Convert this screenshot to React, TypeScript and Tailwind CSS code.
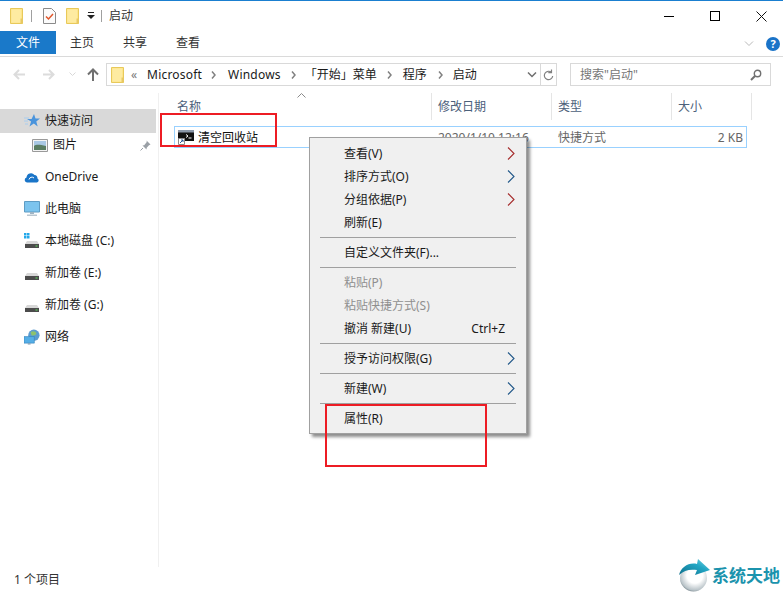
import React from 'react';

const FolderIcon = ({ className = '' }: { className?: string }) => (
  <svg width="13" height="16" viewBox="0 0 13 16" className={className}>
    <path d="M.5.5h12v15H.5z" fill="#fde58a" stroke="#e8c95a" />
    <path d="M1.500 1.500h9.500v13h-9.500z" fill="#fdeeab" opacity=".7" />
    <path d="M10.500 10.500h2v5h-2z" fill="#e8c864" />
  </svg>
);

const CheckDocIcon = () => (
  <svg width="13" height="16" viewBox="0 0 13 16">
    <path d="M.5.5h8l4 4v11H.5z" fill="#fbfbfb" stroke="#8a8a8a" />
    <path d="M3 8.500l2.500 2.500L10 6" fill="none" stroke="#e0562a" strokeWidth="1.500" />
  </svg>
);

const Arrow = ({ color, flip = false }: { color: string; flip?: boolean }) => (
  <svg width="12" height="11" viewBox="0 0 12 11" className={flip ? 'rotate-180' : ''}>
    <path d="M1.500 5.500H12M6 1L1.500 5.500 6 10" fill="none" stroke={color} strokeWidth="2" />
  </svg>
);

const Crumb = () => (
  <svg width="5" height="8" viewBox="0 0 5 8" className="shrink-0">
    <path d="M1 .5L4 4 1 7.500" fill="none" stroke="#808080" strokeWidth="1.500" />
  </svg>
);

const MenuChevron = ({ red = false }: { red?: boolean }) => (
  <svg width="8" height="13" viewBox="0 0 8 13">
    <path d="M1 .5L7 6.500 1 12.500" fill="none" stroke={red ? '#a52a2a' : '#1f5688'} strokeWidth="1.100" />
  </svg>
);

const StarIcon = () => (
  <svg width="16" height="16" viewBox="0 0 16 16">
    <path d="M10 1l1.500 4.600H16l-3.700 2.900 1.400 5-3.900-3-4.300 3 1.600-5L3 6h4.600z" fill="#4a94dc" />
    <path d="M0 5h5M0 8h4M1 11h3" stroke="#a8cdef" strokeWidth="1" />
  </svg>
);

const PictureIcon = () => (
  <svg width="16" height="13" viewBox="0 0 16 13">
    <path d="M.5.500h15v12H.5z" fill="#f4f4f4" stroke="#9a9a9a" />
    <path d="M2 2h12v5H2z" fill="#a9c8e4" />
    <path d="M2 7c3-2 6-1 12 0v4H2z" fill="#5a7d62" />
  </svg>
);

const PinIcon = () => (
  <svg width="11" height="11" viewBox="0 0 11 11">
    <path d="M6.500.5l4 4-1.500.7-2.300 2.600-.2 1.700-4-4 1.700-.2L6.800 2z" fill="#9aa0a6" />
    <path d="M3 8L.5 10.500" stroke="#9aa0a6" />
  </svg>
);

const CloudIcon = () => (
  <svg width="16" height="11" viewBox="0 0 16 11">
    <path d="M3 10.500A2.500 2.500 0 0 1 2.500 5.600 4.500 4.500 0 0 1 10.500 3a3.500 3.500 0 0 1 3 3.400 2.200 2.200 0 0 1-.5 4.100z" fill="#1a75c8" />
    <path d="M5 7.500a3 3 0 0 1 5-1.500" fill="none" stroke="#fff" strokeWidth="1" />
  </svg>
);

const MonitorIcon = () => (
  <svg width="16" height="16" viewBox="0 0 16 16">
    <path d="M.5.500h15v10.500H.5z" fill="#7cc4ee" stroke="#5e9cc4" />
    <path d="M6 11h4v2H6z" fill="#9fb4c4" />
    <path d="M3 13.500h10V15H3z" fill="#b9c6d0" />
  </svg>
);

const DriveIcon = ({ windows = false }: { windows?: boolean }) => (
  <svg width="16" height="16" viewBox="0 0 16 16">
    {windows && <path d="M0 0h2.500v2.500H0zM3 0h2.500v2.500H3zM0 3h2.500v2.500H0zM3 3h2.500v2.500H3z" fill="#23a8ea" />}
    <path d="M3 8h10l2 3H1z" fill="#d8d8d8" />
    <path d="M1 11h14v4H1z" fill="#4c4c4c" />
    <path d="M11.500 12.500h2v1h-2z" fill="#5ee05e" />
  </svg>
);

const NetworkIcon = () => (
  <svg width="17" height="17" viewBox="0 0 17 17">
    <circle cx="10.500" cy="6" r="6" fill="#5b9bd0" />
    <path d="M7 3c2-2 6-1 6 1s-3 3-5 2z" fill="#8cc26e" />
    <path d="M0 7.500h11v7H0z" fill="#55aee6" stroke="#2f7fb8" strokeWidth=".6" />
    <path d="M4 14.500h3V16H4z" fill="#8aa4b8" />
  </svg>
);

const ConsoleIcon = () => (
  <svg width="16" height="15" viewBox="0 0 16 15">
    <path d="M0 0h16v11H0z" fill="#111" />
    <path d="M0 0h16v2.500H0z" fill="#8a97a8" />
    <path d="M8 4.500l2 1.500-2 1.500M10.500 8h3" fill="none" stroke="#fff" strokeWidth="1" />
    <path d="M.5 8.500h6v6h-6z" fill="#fff" stroke="#8a8a8a" />
    <path d="M2 13l3-3M3 10h2v2" fill="none" stroke="#2a5d9c" strokeWidth="1" />
  </svg>
);

const LogoIcon = () => (
  <svg width="33" height="34" viewBox="0 0 33 34">
    <defs>
      <radialGradient id="ball" cx="0.55" cy="0.4" r="0.65">
        <stop offset="0.45" stopColor="#ffffff" />
        <stop offset="0.85" stopColor="#b9c3c8" />
        <stop offset="1" stopColor="#5f7078" />
      </radialGradient>
      <linearGradient id="swoosh" x1="0" y1="1" x2="1" y2="0">
        <stop offset="0" stopColor="#0f6f8c" />
        <stop offset="0.6" stopColor="#22a6c4" />
        <stop offset="1" stopColor="#7fd6e6" />
      </linearGradient>
    </defs>
    <circle cx="15.500" cy="20" r="13.500" fill="url(#ball)" />
    <path d="M1 17C3 9 11 4 19 6l1-5 12 11-15 5 2-5C12 11 6 12 1 17z" fill="url(#swoosh)" />
  </svg>
);

type NavItem = { label: string; icon: React.ReactNode; indent?: boolean; active?: boolean; pin?: boolean; gap: string };

const navItems: NavItem[] = [
  { label: '快速访问', icon: <StarIcon />, active: true, gap: 'mt-0' },
  { label: '图片', icon: <PictureIcon />, indent: true, pin: true, gap: 'mt-0' },
  { label: 'OneDrive', icon: <CloudIcon />, gap: 'mt-2' },
  { label: '此电脑', icon: <MonitorIcon />, gap: 'mt-2' },
  { label: '本地磁盘 (C:)', icon: <DriveIcon windows />, gap: 'mt-2' },
  { label: '新加卷 (E:)', icon: <DriveIcon />, gap: 'mt-2' },
  { label: '新加卷 (G:)', icon: <DriveIcon />, gap: 'mt-2' },
  { label: '网络', icon: <NetworkIcon />, gap: 'mt-2' },
];

type MenuEntry = { label?: string; arrow?: 'red' | 'blue'; disabled?: boolean; hint?: string; sep?: boolean };

const menu: MenuEntry[] = [
  { label: '查看(V)', arrow: 'red' },
  { label: '排序方式(O)', arrow: 'blue' },
  { label: '分组依据(P)', arrow: 'red' },
  { label: '刷新(E)' },
  { sep: true },
  { label: '自定义文件夹(F)...' },
  { sep: true },
  { label: '粘贴(P)', disabled: true },
  { label: '粘贴快捷方式(S)', disabled: true },
  { label: '撤消 新建(U)', hint: 'Ctrl+Z' },
  { sep: true },
  { label: '授予访问权限(G)', arrow: 'blue' },
  { sep: true },
  { label: '新建(W)', arrow: 'blue' },
  { sep: true },
  { label: '属性(R)' },
];

const columns = [
  { label: '修改日期', w: 'w-[120px]' },
  { label: '类型', w: 'w-[120px]' },
  { label: '大小', w: 'w-[80px]' },
];

export default function App() {
  return (
    <div className="relative w-[783px] h-[592px] overflow-hidden bg-white text-[12px] leading-none text-[#1a1a1a] font-['Noto_Sans','Noto_Sans_CJK_SC',sans-serif] border-t border-[#1a7fd0] flex flex-col">
      {/* title bar */}
      <div className="h-[30px] shrink-0 flex items-center pl-[10px]">
        <FolderIcon />
        <div className="w-px h-[12px] bg-[#a0a0a0] ml-[8px]" />
        <div className="ml-[11px]"><CheckDocIcon /></div>
        <div className="ml-[10px]"><FolderIcon /></div>
        <svg width="8" height="8" viewBox="0 0 8 8" className="ml-[8px]">
          <path d="M1 0h6v1H1zM0 3h8L4 7z" fill="#222" />
        </svg>
        <div className="w-px h-[12px] bg-[#a0a0a0] ml-[6px]" />
        <span className="ml-[7px] text-[#333]">启动</span>
        <div className="ml-auto flex items-center">
          <div className="w-[10px] h-px bg-black mr-[36px]" />
          <div className="w-[10px] h-[10px] border border-black mr-[36px]" />
          <svg width="11" height="11" viewBox="0 0 11 11" className="mr-[16px]">
            <path d="M.5.500l10 10M10.500.500l-10 10" stroke="#111" strokeWidth="1" />
          </svg>
        </div>
      </div>

      {/* ribbon tabs */}
      <div className="h-[26px] shrink-0 flex items-start border-b border-[#dadada]">
        <div className="w-[56px] h-[23px] bg-[#1a79c9] text-white flex items-center justify-center pt-px">文件</div>
        <span className="ml-[14px] h-[23px] pt-px flex items-center text-[#333]">主页</span>
        <span className="ml-[29px] h-[23px] pt-px flex items-center text-[#333]">共享</span>
        <span className="ml-[29px] h-[23px] pt-px flex items-center text-[#333]">查看</span>
        <div className="ml-auto h-[25px] flex items-center pr-[3px]">
          <svg width="10" height="6" viewBox="0 0 10 6" className="mr-[12px]">
            <path d="M1 .5L5 4.500 9 .5" fill="none" stroke="#b8b8b8" strokeWidth="1" />
          </svg>
          <div className="w-[14px] h-[14px] rounded-full bg-[#1a73c8] text-white font-bold text-[11px] flex items-center justify-center">?</div>
        </div>
      </div>

      {/* address row */}
      <div className="h-[36px] shrink-0 flex items-start pt-[6px]">
        <div className="w-[106px] h-[23px] flex items-center pl-[13px]">
          <Arrow color="#dcdcdc" />
          <div className="ml-[18px] flex"><Arrow color="#dcdcdc" flip /></div>
          <svg width="7" height="5" viewBox="0 0 7 5" className="ml-[14px]">
            <path d="M.5.5l3 3 3-3" fill="none" stroke="#d8d8d8" />
          </svg>
          <svg width="12" height="13" viewBox="0 0 12 13" className="ml-[11px]">
            <path d="M6 13V2M1 6.500L6 1.500l5 5" fill="none" stroke="#707070" strokeWidth="2" />
          </svg>
        </div>
        <div className="w-[451px] h-[23px] border border-[#d9d9d9] flex items-center pl-[4px]">
          <FolderIcon />
          <span className="ml-[7px] text-[#777]">«</span>
          <span className="ml-[10px] tracking-[0.2px]">Microsoft</span>
          <span className="ml-[9px]"><Crumb /></span>
          <span className="ml-[12px] tracking-[0.2px]">Windows</span>
          <span className="ml-[10px]"><Crumb /></span>
          <span className="ml-[9px]">「开始」菜单</span>
          <span className="ml-[10px]"><Crumb /></span>
          <span className="ml-[11px]">程序</span>
          <span className="ml-[11px]"><Crumb /></span>
          <span className="ml-[10px]">启动</span>
          <svg width="10" height="6" viewBox="0 0 10 6" className="ml-auto mr-[3px]">
            <path d="M1 .5L5 4.500 9 .5" fill="none" stroke="#707070" strokeWidth="1.500" />
          </svg>
          <div className="w-[16px] h-full border-l border-[#d9d9d9] flex items-center justify-center">
            <svg width="11" height="12" viewBox="0 0 11 12">
              <path d="M8.500 3.500A4.200 4.200 0 1 0 9.700 7M8.500.5v3.200H5.300" fill="none" stroke="#808080" strokeWidth="1.200" />
            </svg>
          </div>
        </div>
        <div className="ml-[13px] w-[201px] h-[23px] border border-[#d9d9d9] flex items-center pl-[9px] pr-[8px] text-[#777]">
          搜索"启动"
          <svg width="12" height="12" viewBox="0 0 12 12" className="ml-auto">
            <circle cx="7.500" cy="4.500" r="3.200" fill="none" stroke="#707070" strokeWidth="1.400" />
            <path d="M5 7l-4 4" stroke="#707070" strokeWidth="2" />
          </svg>
        </div>
      </div>

      {/* body */}
      <div className="flex-1 flex min-h-0">
        <div className="w-[159px] shrink-0 border-r border-[#f0f0f0] pt-[16px] pr-[2px]">
          {navItems.map((item) => (
            <div
              key={item.label}
              className={`h-[24px] flex items-center ${item.gap} ${item.indent ? 'pl-[32px]' : 'pl-[24px]'} ${item.active ? 'bg-[#d9d9d9]' : ''}`}
            >
              <span className="w-[16px] flex justify-center">{item.icon}</span>
              <span className="ml-[5px]">{item.label}</span>
              {item.pin && <span className="ml-auto mr-[5px]"><PinIcon /></span>}
            </div>
          ))}
        </div>

        <div className="flex-1 min-w-0">
          {/* column headers */}
          <div className="h-[27px] flex text-[#4c607a] relative">
            <div className="w-[273px] h-full flex items-center pl-[18px] border-r border-[#e5e5e5]">名称</div>
            {columns.map((c) => (
              <div key={c.label} className={`${c.w} h-full flex items-center pl-[6px] border-r border-[#e5e5e5]`}>{c.label}</div>
            ))}
            <svg width="9" height="5" viewBox="0 0 9 5" className="absolute left-[138px] top-[0px]">
              <path d="M.5 4.500l4-4 4 4" fill="none" stroke="#8a8a8a" />
            </svg>
          </div>
          {/* file row */}
          <div className="ml-[15px] mt-[6px] w-[573px] h-[22px] pt-px border border-[#99d1ff] flex items-center text-[#666]">
            <span className="ml-[3px] flex"><ConsoleIcon /></span>
            <span className="ml-[4px] text-[#111] w-[240px]">清空回收站</span>
            <span className="w-[120px]">2020/1/10 12:16</span>
            <span className="w-[120px]">快捷方式</span>
            <span className="w-[65px] text-right">2 KB</span>
          </div>
        </div>
      </div>

      {/* status bar */}
      <div className="h-[25px] shrink-0 flex items-start pl-[14px] pt-[7px] text-[#333]">1 个项目</div>

      {/* context menu */}
      <div className="absolute left-[309px] top-[136px] w-[218px] h-[297px] bg-[#f0f0f0] border border-[#a0a0a0] pt-[4px] shadow-[3px_3px_3px_rgba(0,0,0,0.45)]">
        {menu.map((m, i) =>
          m.sep ? (
            <div key={i} className="h-px bg-[#a0a0a0] mx-[10px] my-[3px]" />
          ) : (
            <div key={i} className={`h-[23px] flex items-center pl-[34px] pr-[11px] ${m.disabled ? 'text-[#8f8f8f]' : 'text-[#1a1a1a]'}`}>
              {m.label}
              {m.hint && <span className="ml-auto mr-[10px]">{m.hint}</span>}
              {m.arrow && <span className="ml-auto flex"><MenuChevron red={m.arrow === 'red'} /></span>}
            </div>
          ),
        )}
      </div>

      {/* red annotation boxes */}
      <div className="absolute left-[160px] top-[112px] w-[117px] h-[34px] border-2 border-[#ed1c24]" />
      <div className="absolute left-[325px] top-[403px] w-[162px] h-[63px] border-2 border-[#ed1c24]" />

      {/* watermark */}
      <div className="absolute left-[678px] top-[557px] flex items-center">
        <LogoIcon />
        <span className="ml-[1px] text-[17px] font-bold text-[#1b93ad]">系统天地</span>
      </div>
    </div>
  );
}
